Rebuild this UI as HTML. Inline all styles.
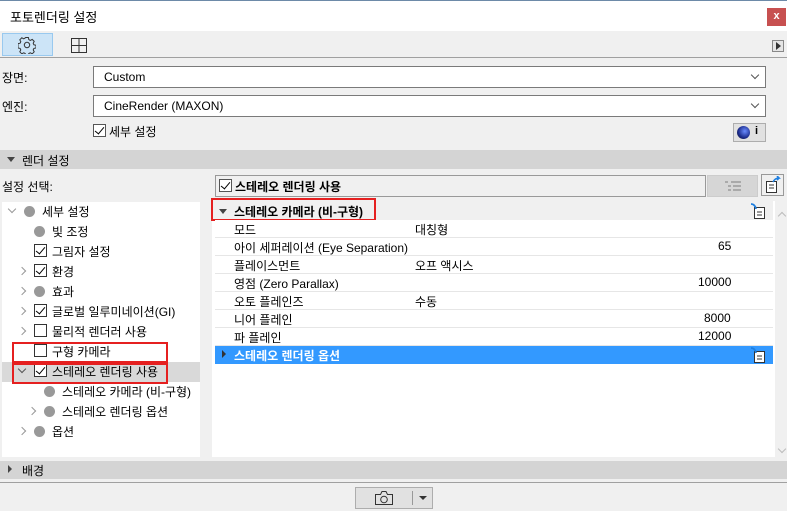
<html><head><style>
*{margin:0;padding:0;box-sizing:border-box}
body{width:787px;height:511px;background:#f0f0f0;font-family:"Liberation Sans","Noto Sans CJK KR",sans-serif;font-size:12px;color:#000;position:relative;overflow:hidden}
.a{position:absolute}
.cb{position:absolute;width:13px;height:13px;border:1px solid #333;background:#fff}
.cb.on::after{content:"";position:absolute;left:3px;top:0px;width:4px;height:8px;border:solid #000;border-width:0 1.6px 1.6px 0;transform:rotate(40deg)}
.dot{position:absolute;width:11px;height:11px;border-radius:50%;background:#999}
.chev{position:absolute;width:6px;height:6px;border:solid #999;border-width:0 1.5px 1.5px 0}
.r{transform:rotate(-45deg)}.d{transform:rotate(45deg)}
.row{position:absolute;left:215px;width:558px;height:18px;background:#fff;border-bottom:1px solid #e6e6e6}
.row span{position:absolute;top:1px}
.dd{position:absolute;left:93px;width:673px;height:22px;background:#fff;border:1px solid #7a7a7a;padding:3px 10px}
</style></head><body>
<div class="a" style="left:0;top:0;width:787px;height:31px;background:#fff;border-top:1px solid #6d8aa8"></div>
<div class="a" style="left:10px;top:7px;font-size:13px">포토렌더링 설정</div>
<div class="a" style="left:767px;top:8px;width:19px;height:18px;background:#c75050;color:#fff;font-size:11px;font-weight:bold;text-align:center;line-height:17px">x</div>
<div class="a" style="left:2px;top:33px;width:51px;height:23px;background:#cce4f7;border:1px solid #99c9ef"></div>
<svg class="a" style="left:18px;top:36px" width="18" height="18" viewBox="0 0 18 18"><path d="M7.6 1.5h2.8l.4 2.1 1.5.8 1.9-1 2 2-1 1.9.7 1.5 2.1.4v2.8l-2.1.4-.7 1.5 1 1.9-2 2-1.9-1-1.5.7-.4 2.1H7.6l-.4-2.1-1.5-.7-1.9 1-2-2 1-1.9-.7-1.5-2.1-.4V7.6l2.1-.4.7-1.5-1-1.9 2-2 1.9 1 1.5-.8z" fill="none" stroke="#333" stroke-width="1"/><circle cx="9" cy="9" r="2.7" fill="none" stroke="#333"/></svg>
<svg class="a" style="left:71px;top:38px" width="16" height="15"><rect x=".5" y=".5" width="15" height="14" fill="none" stroke="#333"/><path d="M8 1v13M1 7.5h14" stroke="#333"/></svg>
<div class="a" style="left:772px;top:40px;width:12px;height:12px;border:1px solid #888;background:#e5e5e5"></div>
<div class="a" style="left:776px;top:42px;border-left:5px solid #333;border-top:4px solid transparent;border-bottom:4px solid transparent"></div>
<div class="a" style="left:0;top:57px;width:787px;height:1px;background:#a0a0a0"></div>
<div class="a" style="left:2px;top:69px">장면:</div>
<div class="dd" style="top:66px">Custom</div>
<div class="chev d" style="left:752px;top:72px;border-color:#555;border-width:0 1px 1px 0"></div>
<div class="a" style="left:2px;top:98px">엔진:</div>
<div class="dd" style="top:95px">CineRender (MAXON)</div>
<div class="chev d" style="left:752px;top:101px;border-color:#555;border-width:0 1px 1px 0"></div>
<div class="cb on" style="left:93px;top:124px;border-color:#555"></div>
<div class="a" style="left:109px;top:123px">세부 설정</div>
<div class="a" style="left:733px;top:123px;width:33px;height:19px;background:#e1e1e1;border:1px solid #adadad"></div>
<div class="a" style="left:737px;top:126px;width:13px;height:13px;border-radius:50%;background:radial-gradient(circle at 60% 40%,#6a8cff,#1a2a8a 60%,#222)"></div>
<div class="a" style="left:755px;top:125px;font-weight:bold;font-size:11px">i</div>
<div class="a" style="left:0;top:150px;width:787px;height:19px;background:#d4d4d4"></div>
<div class="a" style="left:7px;top:157px;border-top:5px solid #444;border-left:4px solid transparent;border-right:4px solid transparent"></div>
<div class="a" style="left:22px;top:152px">렌더 설정</div>
<div class="a" style="left:2px;top:178px">설정 선택:</div>
<div class="a" style="left:2px;top:202px;width:198px;height:255px;background:#fff"></div>
<div class="a" style="left:2px;top:362px;width:198px;height:20px;background:#d9d9d9"></div>
<div class="chev d" style="left:9px;top:206px"></div><div class="dot" style="left:24px;top:206px"></div><div class="a" style="left:42px;top:203px">세부 설정</div>
<div class="dot" style="left:34px;top:226px"></div><div class="a" style="left:52px;top:223px">빛 조정</div>
<div class="cb on" style="left:34px;top:244px"></div><div class="a" style="left:52px;top:243px">그림자 설정</div>
<div class="chev r" style="left:19px;top:268px"></div><div class="cb on" style="left:34px;top:264px"></div><div class="a" style="left:52px;top:263px">환경</div>
<div class="chev r" style="left:19px;top:288px"></div><div class="dot" style="left:34px;top:286px"></div><div class="a" style="left:52px;top:283px">효과</div>
<div class="chev r" style="left:19px;top:308px"></div><div class="cb on" style="left:34px;top:304px"></div><div class="a" style="left:52px;top:303px">글로벌 일루미네이션(GI)</div>
<div class="chev r" style="left:19px;top:328px"></div><div class="cb" style="left:34px;top:324px"></div><div class="a" style="left:52px;top:323px">물리적 렌더러 사용</div>
<div class="cb" style="left:34px;top:344px"></div><div class="a" style="left:52px;top:343px">구형 카메라</div>
<div class="chev d" style="left:19px;top:366px;border-color:#555"></div><div class="cb on" style="left:34px;top:364px"></div><div class="a" style="left:52px;top:363px">스테레오 렌더링 사용</div>
<div class="dot" style="left:44px;top:386px"></div><div class="a" style="left:62px;top:383px">스테레오 카메라 (비-구형)</div>
<div class="chev r" style="left:29px;top:408px"></div><div class="dot" style="left:44px;top:406px"></div><div class="a" style="left:62px;top:403px">스테레오 렌더링 옵션</div>
<div class="chev r" style="left:19px;top:428px"></div><div class="dot" style="left:34px;top:426px"></div><div class="a" style="left:52px;top:423px">옵션</div>
<div class="a" style="left:12px;top:342px;width:156px;height:21px;border:2px solid #e52020"></div>
<div class="a" style="left:12px;top:363px;width:156px;height:21px;border:2px solid #e52020"></div>
<div class="a" style="left:215px;top:175px;width:491px;height:22px;border:1px solid #999;background:#f0f0f0"></div>
<div class="cb on" style="left:219px;top:179px;border-color:#555"></div>
<div class="a" style="left:235px;top:178px;font-weight:bold">스테레오 렌더링 사용</div>
<div class="a" style="left:707px;top:175px;width:51px;height:22px;background:#d6d6d6;border:1px solid #ccc"></div>
<svg class="a" style="left:723px;top:180px" width="20" height="12"><path d="M2 2h3M8 2h10M5 6h3M10 6h8M5 10h3M10 10h8" stroke="#aaa" stroke-width="2"/></svg>
<div class="a" style="left:761px;top:174px;width:23px;height:22px;border:1px solid #999;background:#f0f0f0"></div>
<svg class="a" style="left:765px;top:176px" width="16" height="18"><rect x="1.5" y="5.5" width="10" height="11" fill="#fff" stroke="#333"/><path d="M4 9h5M4 12h5" stroke="#333"/><path d="M8 6q2-4 6-4l-2-2M14 2l-2 2" stroke="#1e7fe0" stroke-width="1.6" fill="none"/></svg>
<div class="a" style="left:212px;top:201px;width:563px;height:256px;background:#fff"></div>
<div class="a" style="left:212px;top:201px;width:561px;height:19px;background:#f0f0f0"></div>
<div class="a" style="left:219px;top:209px;border-top:5px solid #444;border-left:4px solid transparent;border-right:4px solid transparent"></div>
<div class="a" style="left:234px;top:203px;font-weight:bold">스테레오 카메라 (비-구형)</div>
<svg class="a" style="left:750px;top:203px" width="16" height="16"><rect x="4.5" y="4.5" width="10" height="11" fill="#fff" stroke="#333"/><path d="M7 9h5M7 12h5" stroke="#333"/><path d="M1 1q4 0 5 5" stroke="#1e7fe0" stroke-width="1.8" fill="none"/></svg>
<div class="a" style="left:211px;top:198px;width:165px;height:23px;border:2px solid #e52020"></div>
<div class="row" style="top:220px"><span style="left:19px">모드</span><span style="left:200px">대칭형</span></div>
<div class="row" style="top:238px"><span style="left:19px">아이 세퍼레이션 (Eye Separation)</span><span style="left:503px">65</span></div>
<div class="row" style="top:256px"><span style="left:19px">플레이스먼트</span><span style="left:200px">오프 액시스</span></div>
<div class="row" style="top:274px"><span style="left:19px">영점 (Zero Parallax)</span><span style="left:483px">10000</span></div>
<div class="row" style="top:292px"><span style="left:19px">오토 플레인즈</span><span style="left:200px">수동</span></div>
<div class="row" style="top:310px"><span style="left:19px">니어 플레인</span><span style="left:489px">8000</span></div>
<div class="row" style="top:328px"><span style="left:19px">파 플레인</span><span style="left:483px">12000</span></div>
<div class="a" style="left:215px;top:346px;width:558px;height:18px;background:#3399ff"></div>
<div class="a" style="left:222px;top:350px;border-left:4px solid #333;border-top:4px solid transparent;border-bottom:4px solid transparent"></div>
<div class="a" style="left:234px;top:347px;font-weight:bold;color:#fff">스테레오 렌더링 옵션</div>
<svg class="a" style="left:750px;top:347px" width="16" height="16"><rect x="4.5" y="4.5" width="10" height="11" fill="#fff" stroke="#333"/><path d="M7 9h5M7 12h5" stroke="#333"/><path d="M1 1q4 0 5 5" stroke="#1e7fe0" stroke-width="1.8" fill="none"/></svg>
<div class="chev" style="left:779px;top:213px;transform:rotate(-135deg);border-color:#bbb"></div>
<div class="chev d" style="left:779px;top:446px;border-color:#bbb"></div>
<div class="a" style="left:0;top:461px;width:787px;height:18px;background:#d4d4d4"></div>
<div class="a" style="left:8px;top:465px;border-left:4px solid #444;border-top:4px solid transparent;border-bottom:4px solid transparent"></div>
<div class="a" style="left:22px;top:462px">배경</div>
<div class="a" style="left:0;top:482px;width:787px;height:1px;background:#a0a0a0"></div>
<div class="a" style="left:355px;top:487px;width:78px;height:22px;background:#e1e1e1;border:1px solid #adadad"></div>
<svg class="a" style="left:374px;top:490px" width="20" height="16"><path d="M1.5 4.5h5l1.5-3h4l1.5 3h5v10h-17z" fill="none" stroke="#333"/><circle cx="10" cy="9.5" r="3.3" fill="none" stroke="#333"/></svg>
<div class="a" style="left:412px;top:491px;width:1px;height:14px;background:#999"></div>
<div class="a" style="left:419px;top:496px;border-top:4px solid #333;border-left:4px solid transparent;border-right:4px solid transparent"></div>
</body></html>
